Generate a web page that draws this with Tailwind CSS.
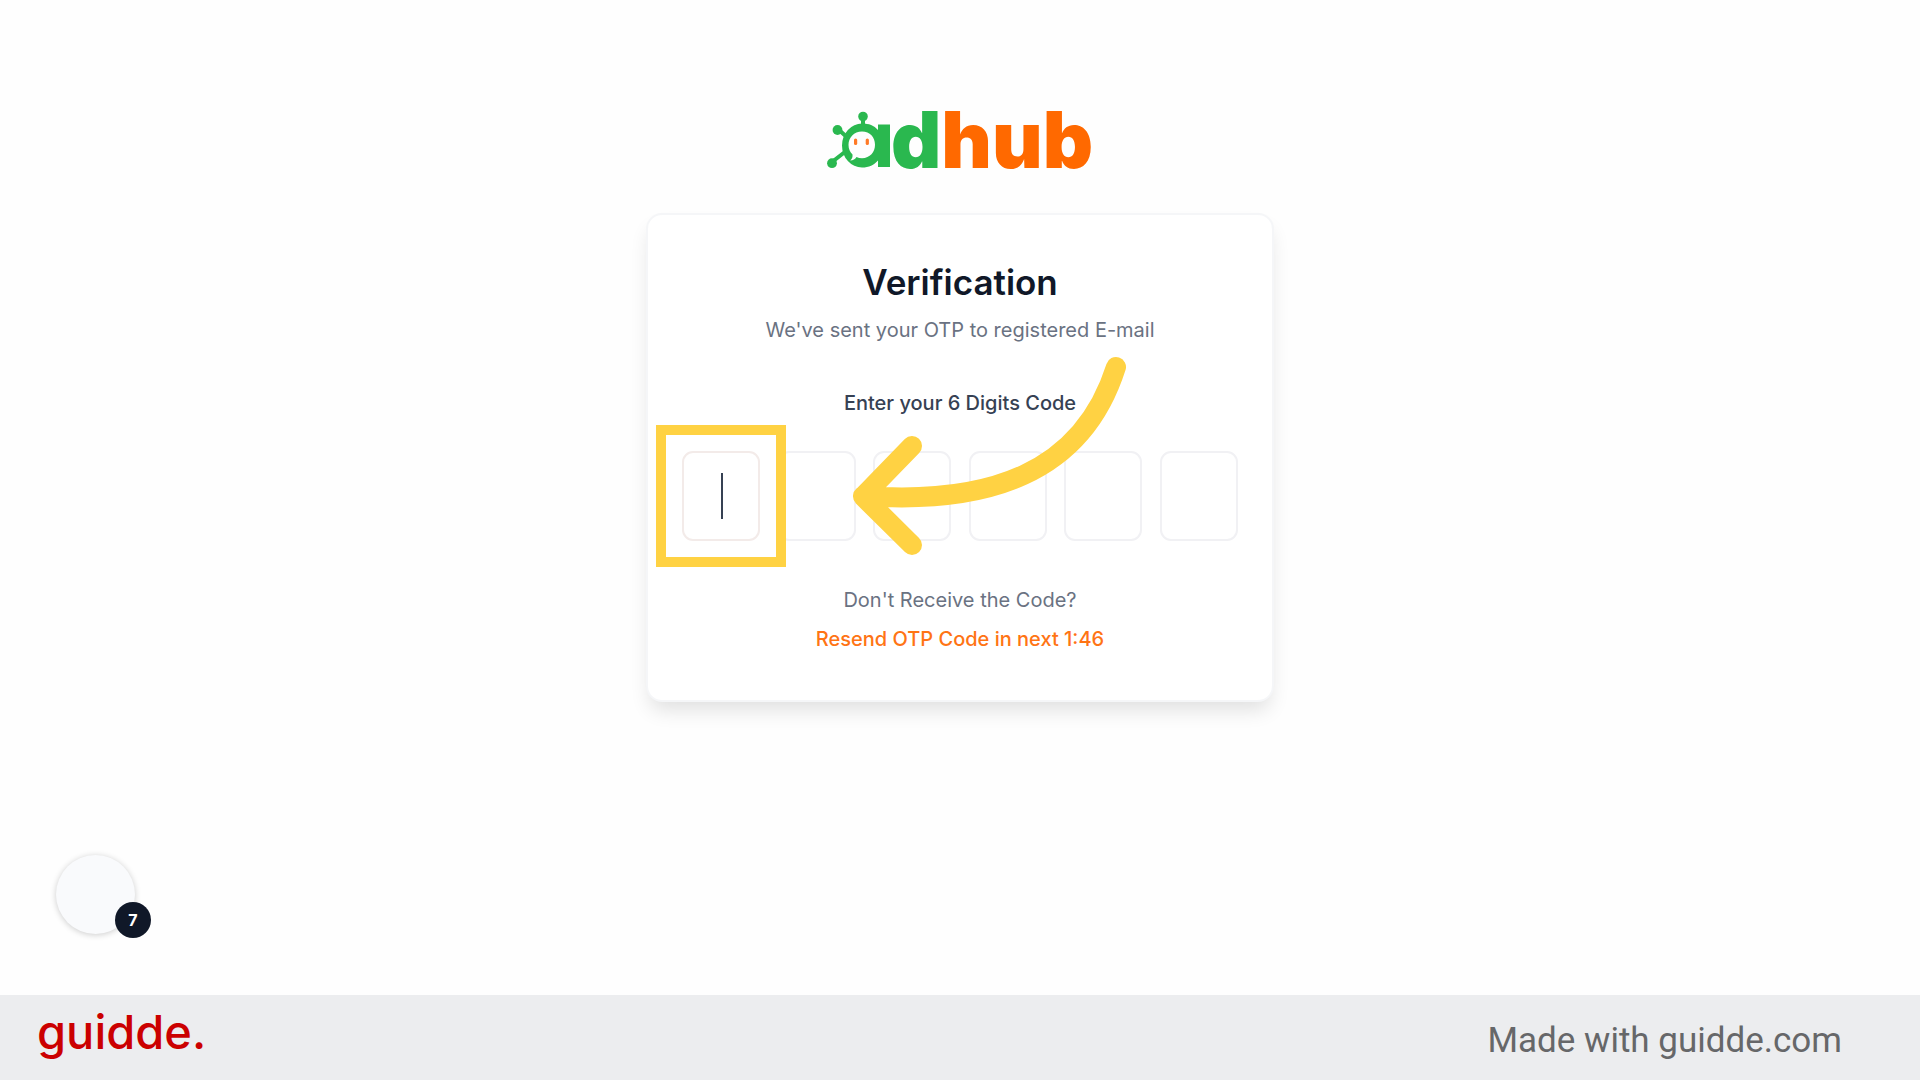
<!DOCTYPE html>
<html lang="en">

<head>
  <title>adhub - Verification</title>
  <meta charset="UTF-8">
  <meta name="viewport" content="width=device-width, initial-scale=1.0">
  <script src="https://cdn.jsdelivr.net/npm/@tailwindcss/browser@4"></script>
</head>

<body class="relative flex min-h-screen flex-col bg-[#fefefe] font-['Inter',sans-serif]">
  <main class="flex flex-1 flex-col items-center px-4 pt-[108px]">
    <!-- Logo -->
    <a href="#" class="flex h-16 items-end" aria-label="adhub">
      <svg class="h-16 w-16" viewBox="0 0 64 64" aria-hidden="true">
        <g stroke="#2ab84f" stroke-width="4">
          <path d="M36 8v16M11 21l12 11M5 54l18-14" />
        </g>
        <g fill="#2ab84f">
          <circle cx="36" cy="8.500" r="4.800" />
          <circle cx="10.500" cy="22" r="4.900" />
          <circle cx="5" cy="55.200" r="4.900" />
          <path d="M35 15.500a20 22 0 0 0 0 44c7 0 12-2.500 16-7v6.500h12V16.500H51V22c-4-4.500-9-6.500-16-6.500z" />
        </g>
        <path d="M35 23.500c-8 0-13.500 6-13.500 13.300 0 4 1.500 7.400 4 9.800.3 2.500-.5 4.500-2.300 6 3-.2 5-1.600 6.300-3.600 1.700.8 3.500 1.200 5.500 1.200 8 0 13-6 13-13.400S43 23.500 35 23.500z" fill="#fefefe" />
        <rect x="27" y="30.500" width="3.200" height="6.500" rx="1.600" fill="#ff7a26" />
        <rect x="38.700" y="30.500" width="3.200" height="6.500" rx="1.600" fill="#ff7a26" />
      </svg>
      <span class="text-[78px] leading-[64px] font-black text-[#2ab84f]">d<span class="text-[#ff6900]">hub</span></span>
    </a>

    <!-- Verification card -->
    <form class="mt-[41px] flex w-full max-w-[628px] flex-col items-center rounded-2xl border-2 border-gray-100/80 bg-white px-[34px] pt-[47px] pb-[47px] shadow-[0_12px_20px_-4px_rgba(0,0,0,0.12)]">
      <h1 class="text-[35px] leading-10 font-semibold text-gray-900">Verification</h1>
      <p class="mt-3.5 text-[20px] leading-7 text-gray-500">We've sent your OTP to registered E-mail</p>
      <label for="code1" class="mt-[45px] text-[20px] leading-7 font-medium text-gray-700">Enter your 6 Digits Code</label>

      <div class="relative mt-[34px] flex w-full justify-between">
        <div class="relative">
          <input id="code1" type="text" maxlength="1" class="block h-[90px] w-[78px] rounded-[11px] border-2 border-[#f3ebe9] text-center text-4xl outline-none" />
          <span class="absolute top-[22px] left-[39px] h-[46px] w-0.5 bg-gray-700"></span>
          <div class="pointer-events-none absolute -inset-[26px] border-10 border-[#ffd243]"></div>
        </div>
        <input type="text" maxlength="1" aria-label="Digit 2" class="h-[90px] w-[78px] rounded-[11px] border-2 border-[#f1f1f4] text-center text-4xl outline-none" />
        <input type="text" maxlength="1" aria-label="Digit 3" class="h-[90px] w-[78px] rounded-[11px] border-2 border-[#f1f1f4] text-center text-4xl outline-none" />
        <input type="text" maxlength="1" aria-label="Digit 4" class="h-[90px] w-[78px] rounded-[11px] border-2 border-[#f1f1f4] text-center text-4xl outline-none" />
        <input type="text" maxlength="1" aria-label="Digit 5" class="h-[90px] w-[78px] rounded-[11px] border-2 border-[#f1f1f4] text-center text-4xl outline-none" />
        <input type="text" maxlength="1" aria-label="Digit 6" class="h-[90px] w-[78px] rounded-[11px] border-2 border-[#f1f1f4] text-center text-4xl outline-none" />

        <!-- Pointer arrow -->
        <svg class="pointer-events-none absolute -top-[95px] left-[170px] h-[200px] w-[276px]" viewBox="0 0 276 200" fill="none" stroke="#ffd243" stroke-width="20" stroke-linecap="round" stroke-linejoin="round" aria-hidden="true">
          <path d="M264 11C230 118 136 149 11 140M60 90L11 140.500l49 48.500" />
        </svg>
      </div>

      <p class="mt-[45px] text-[20px] leading-7 text-gray-500">Don't Receive the Code?</p>
      <button type="button" class="mt-[11px] text-[20px] leading-7 font-medium text-[#ff7414]">Resend OTP Code in next 1:46</button>
    </form>
  </main>

  <!-- Chat launcher -->
  <button type="button" aria-label="Messages" class="absolute bottom-[146px] left-14 size-[79px] rounded-full bg-[#f9fafc] shadow-[0_1px_6px_rgba(0,0,0,0.2)]">
    <span class="absolute -right-4 -bottom-1 flex size-9 items-center justify-center rounded-full bg-gray-900 text-base font-bold text-white">7</span>
  </button>

  <footer class="flex h-[85px] items-center justify-between bg-[#ecedef] pr-[78px] pl-[37px]">
    <a href="#" class="pb-3 text-[47px] leading-[56px] font-medium text-[#cb0000]">guidde.</a>
    <p class="pt-1.5 font-['Roboto',sans-serif] text-[35px] leading-10 text-[#666769]">Made with guidde.com</p>
  </footer>
</body>

</html>
